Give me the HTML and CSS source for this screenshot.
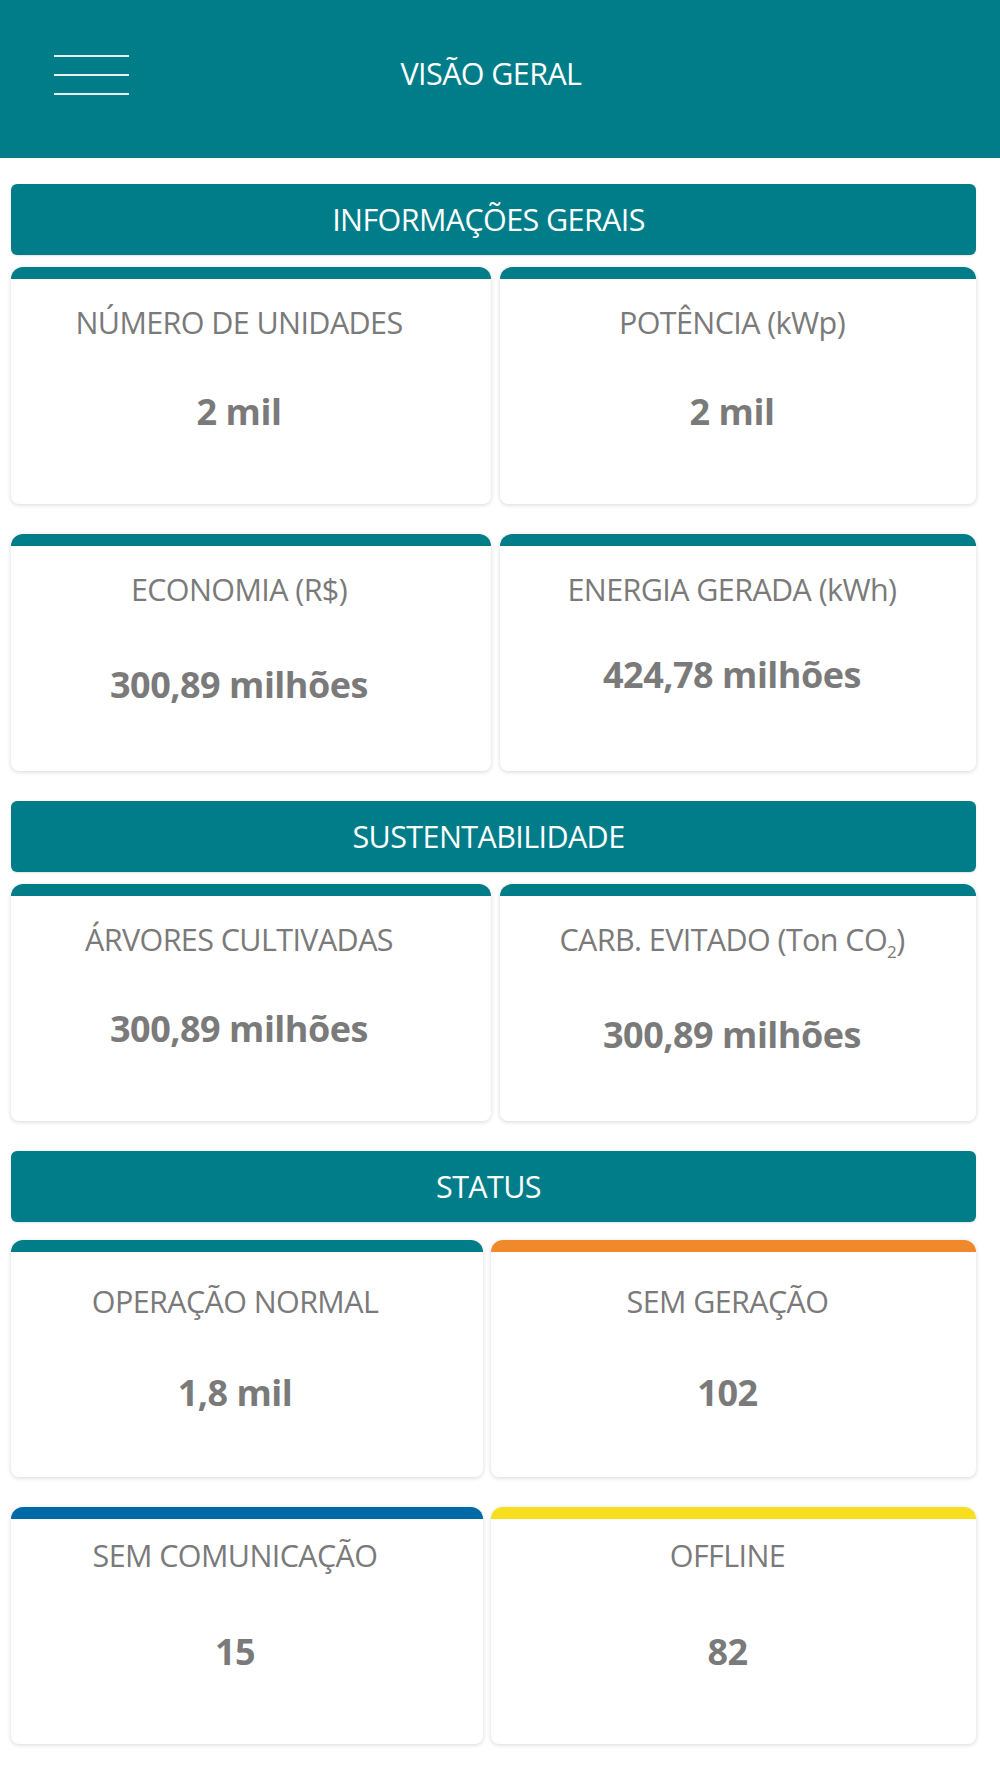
FILE: index.html
```html
<!doctype html>
<html>
<head>
<meta charset="utf-8">
<title>Visão Geral</title>
<link rel="stylesheet" href="styles.css">
</head>
<body>
<header class="top-bar">
    <div class="menu-btn" title="Menu">
        <span class="menu-line"></span>
        <span class="menu-line"></span>
        <span class="menu-line"></span>
    </div>
    <h1 class="top-title">VISÃO GERAL</h1>
    <div></div>
</header>

<main class="overview">
    <section class="block">
        <h2 class="block-title">INFORMAÇÕES GERAIS</h2>
        <ul class="card-grid">
            <li class="info-card">
                <h3 class="card-label">NÚMERO DE UNIDADES</h3>
                <p class="card-value">2 mil</p>
            </li>
            <li class="info-card">
                <h3 class="card-label">POTÊNCIA (kWp)</h3>
                <p class="card-value">2 mil</p>
            </li>
            <li class="info-card">
                <h3 class="card-label">ECONOMIA (R$)</h3>
                <p class="card-value card-value-low">300,89 milhões</p>
            </li>
            <li class="info-card">
                <h3 class="card-label">ENERGIA GERADA (kWh)</h3>
                <p class="card-value card-value-high">424,78 milhões</p>
            </li>
        </ul>
    </section>

    <section class="block">
        <h2 class="block-title">SUSTENTABILIDADE</h2>
        <ul class="card-grid">
            <li class="info-card">
                <h3 class="card-label">ÁRVORES CULTIVADAS</h3>
                <p class="card-value">300,89 milhões</p>
            </li>
            <li class="info-card">
                <h3 class="card-label">CARB. EVITADO (Ton CO<sub>2</sub>)</h3>
                <p class="card-value card-value-low">300,89 milhões</p>
            </li>
        </ul>
    </section>

    <section class="block">
        <h2 class="block-title">STATUS</h2>
        <ul class="card-grid card-grid-status">
            <li class="info-card info-card-low">
                <h3 class="card-label">OPERAÇÃO NORMAL</h3>
                <p class="card-value">1,8 mil</p>
            </li>
            <li class="info-card info-card-low card-orange">
                <h3 class="card-label">SEM GERAÇÃO</h3>
                <p class="card-value">102</p>
            </li>
            <li class="info-card info-card-high card-blue">
                <h3 class="card-label">SEM COMUNICAÇÃO</h3>
                <p class="card-value">15</p>
            </li>
            <li class="info-card info-card-high card-yellow">
                <h3 class="card-label">OFFLINE</h3>
                <p class="card-value">82</p>
            </li>
        </ul>
    </section>
</main>
</body>
</html>
```

FILE: styles.css
```css
html {
    background: #fff;
}
body, h1, h2, h3, p, ul, li {
    margin: 0;
    padding: 0;
}
body {
    font-family: "Open Sans", "Noto Sans", sans-serif;
    color: #777;
}
ul, li { list-style: none; }

/* top bar */
.top-bar {
    height: 158px;
    box-sizing: border-box;
    padding: 55px 0 0 0;
    background: #007d89;
    display: grid;
    grid-template-columns: 1fr auto 1fr;
    align-items: start;
}
.menu-btn {
    margin-left: 54px;
    width: 75px;
    height: 40px;
    display: flex;
    flex-direction: column;
    justify-content: space-between;
    cursor: pointer;
}
.menu-line {
    display: block;
    height: 2px;
    background: #e6f0f1;
}
.top-title {
    font-size: 30.5px;
    font-weight: 400;
    line-height: 36px;
    color: #fff;
    margin-right: 18px;
    letter-spacing: -0.6px;
}

/* sections */
.overview {
    padding: 26px 24px 0 11px;
}
.block { margin-bottom: 30px; }
.block-title {
    height: 71px;
    line-height: 71px;
    background: #007d89;
    border-radius: 6px;
    color: #fff;
    font-size: 30.5px;
    font-weight: 400;
    text-align: center;
    letter-spacing: -0.6px;
    padding-right: 10px;
    box-shadow: 0 1px 2px rgba(0,0,0,0.12);
}
.card-grid {
    margin-top: 12px;
    display: grid;
    grid-template-columns: 480px 1fr;
    column-gap: 9px;
    row-gap: 30px;
}
.card-grid-status {
    margin-top: 18px;
    grid-template-columns: 472px 1fr;
    column-gap: 8px;
}

/* cards */
.info-card {
    height: 237px;
    box-sizing: border-box;
    background: #fff;
    border-top: 12px solid #007d89;
    border-radius: 12px 12px 8px 8px;
    box-shadow: 0 1px 4px rgba(0,0,0,0.16);
    padding: 26px 24px 0 0;
    text-align: center;
}
.info-card:nth-child(even) { padding-right: 12px; }
.info-card-low { padding-top: 32px; }
.info-card-high { padding-top: 19px; }
.card-orange { border-top-color: #f0892c; }
.card-blue { border-top-color: #006aa6; }
.card-yellow { border-top-color: #f8df1e; }
.card-label {
    font-size: 30.5px;
    font-weight: 400;
    line-height: 35px;
    color: #7a7a7a;
    letter-spacing: -0.6px;
}
.card-label sub {
    font-size: 17px;
    line-height: 0;
}
.card-value {
    margin-top: 50px;
    font-size: 36px;
    font-weight: 700;
    line-height: 43px;
    color: #7a7a7a;
    letter-spacing: -0.5px;
}
.card-value-low { margin-top: 56px; }
.card-value-high { margin-top: 46px; }
.info-card-low .card-value { margin-top: 52px; }
.info-card-high .card-value { margin-top: 57px; }
```
